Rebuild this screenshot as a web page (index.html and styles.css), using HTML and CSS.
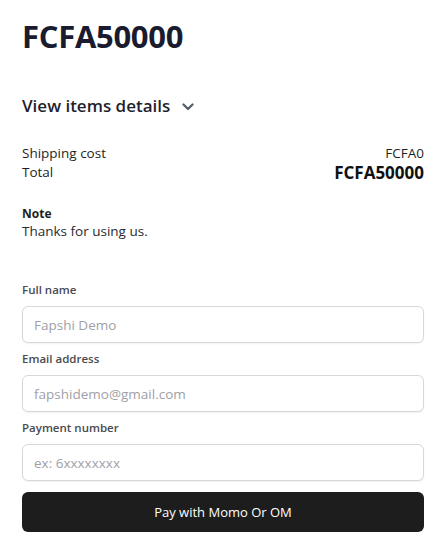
FILE: index.html
```html
<!DOCTYPE html>
<html lang="en">
<head>
<meta charset="utf-8">
<title>Checkout</title>
<link rel="stylesheet" href="styles.css">
</head>
<body>
<main class="page">
  <h1 class="amount">FCFA50000</h1>
  <button class="details-toggle" type="button">
    <span>View items details</span>
    <svg class="chev" width="12" height="8" viewBox="0 0 12 8" aria-hidden="true"><path d="M1.5 1.5 L6 6 L10.5 1.5" fill="none" stroke="#56606c" stroke-width="2.3" stroke-linecap="round" stroke-linejoin="round"/></svg>
  </button>
  <div class="summary">
    <div class="row"><span>Shipping cost</span><span>FCFA0</span></div>
    <div class="row"><span>Total</span><span class="total">FCFA50000</span></div>
  </div>
  <div class="note">
    <div class="note-title">Note</div>
    <div class="note-text">Thanks for using us.</div>
  </div>
  <form class="form">
    <label class="field">
      <span class="label">Full name</span>
      <input class="input" type="text" placeholder="Fapshi Demo">
    </label>
    <label class="field">
      <span class="label">Email address</span>
      <input class="input" type="email" placeholder="fapshidemo@gmail.com">
    </label>
    <label class="field">
      <span class="label">Payment number</span>
      <input class="input" type="tel" placeholder="ex: 6xxxxxxxx">
    </label>
    <button class="pay" type="button">Pay with Momo Or OM</button>
  </form>
</main>
</body>
</html>
```

FILE: styles.css
```css
* { box-sizing: border-box; }
body {
  margin: 0;
  background: #ffffff;
  font-family: "Open Sans", "Noto Sans", sans-serif;
  color: #1f1f24;
}
.page {
  padding: 14px 17px 20px 22px;
  display: flex;
  flex-direction: column;
}
.amount {
  margin: 0;
  font-size: 31px;
  font-weight: 700;
  color: #1b1b2f;
  line-height: 44px;
  letter-spacing: -0.3px;
}
.details-toggle {
  margin-top: 36px;
  padding: 0;
  border: 0;
  background: none;
  display: flex;
  align-items: center;
  gap: 12px;
  font-family: inherit;
  font-size: 17px;
  font-weight: 600;
  color: #1f1f2e;
  line-height: 24px;
  cursor: pointer;
  align-self: flex-start;
}
.chev { margin-top: 2px; }
.summary {
  margin-top: 26px;
  font-size: 13.5px;
  color: #1f1f24;
}
.row {
  display: flex;
  justify-content: space-between;
  align-items: center;
  height: 19px;
  line-height: 19px;
}
.total {
  font-size: 17px;
  font-weight: 700;
  color: #111;
  line-height: 19px;
}
.note {
  margin-top: 23px;
}
.note-title {
  font-size: 12px;
  font-weight: 700;
  line-height: 17px;
  color: #1f1f24;
}
.note-text {
  font-size: 13.5px;
  line-height: 18px;
  color: #2a2a30;
}
.form {
  margin-top: 42px;
  display: flex;
  flex-direction: column;
}
.field {
  display: flex;
  flex-direction: column;
  margin-bottom: 8px;
}
.label {
  font-size: 11.5px;
  font-weight: 600;
  color: #4a4a4f;
  line-height: 16px;
  margin-bottom: 8px;
}
.input {
  height: 37px;
  border: 1px solid #d7d7de;
  border-radius: 6px;
  padding: 0 11px;
  font-family: inherit;
  font-size: 13.5px;
  color: #333;
  background: #fff;
  box-shadow: 0 1px 2px rgba(0,0,0,0.06);
  outline: none;
}
.input::placeholder { color: #a0a0a8; }
.pay {
  margin-top: 3px;
  height: 40px;
  border: 0;
  border-radius: 6px;
  background: #1d1d1d;
  color: #ffffff;
  font-family: inherit;
  font-size: 13px;
  font-weight: 500;
  cursor: pointer;
}
```
